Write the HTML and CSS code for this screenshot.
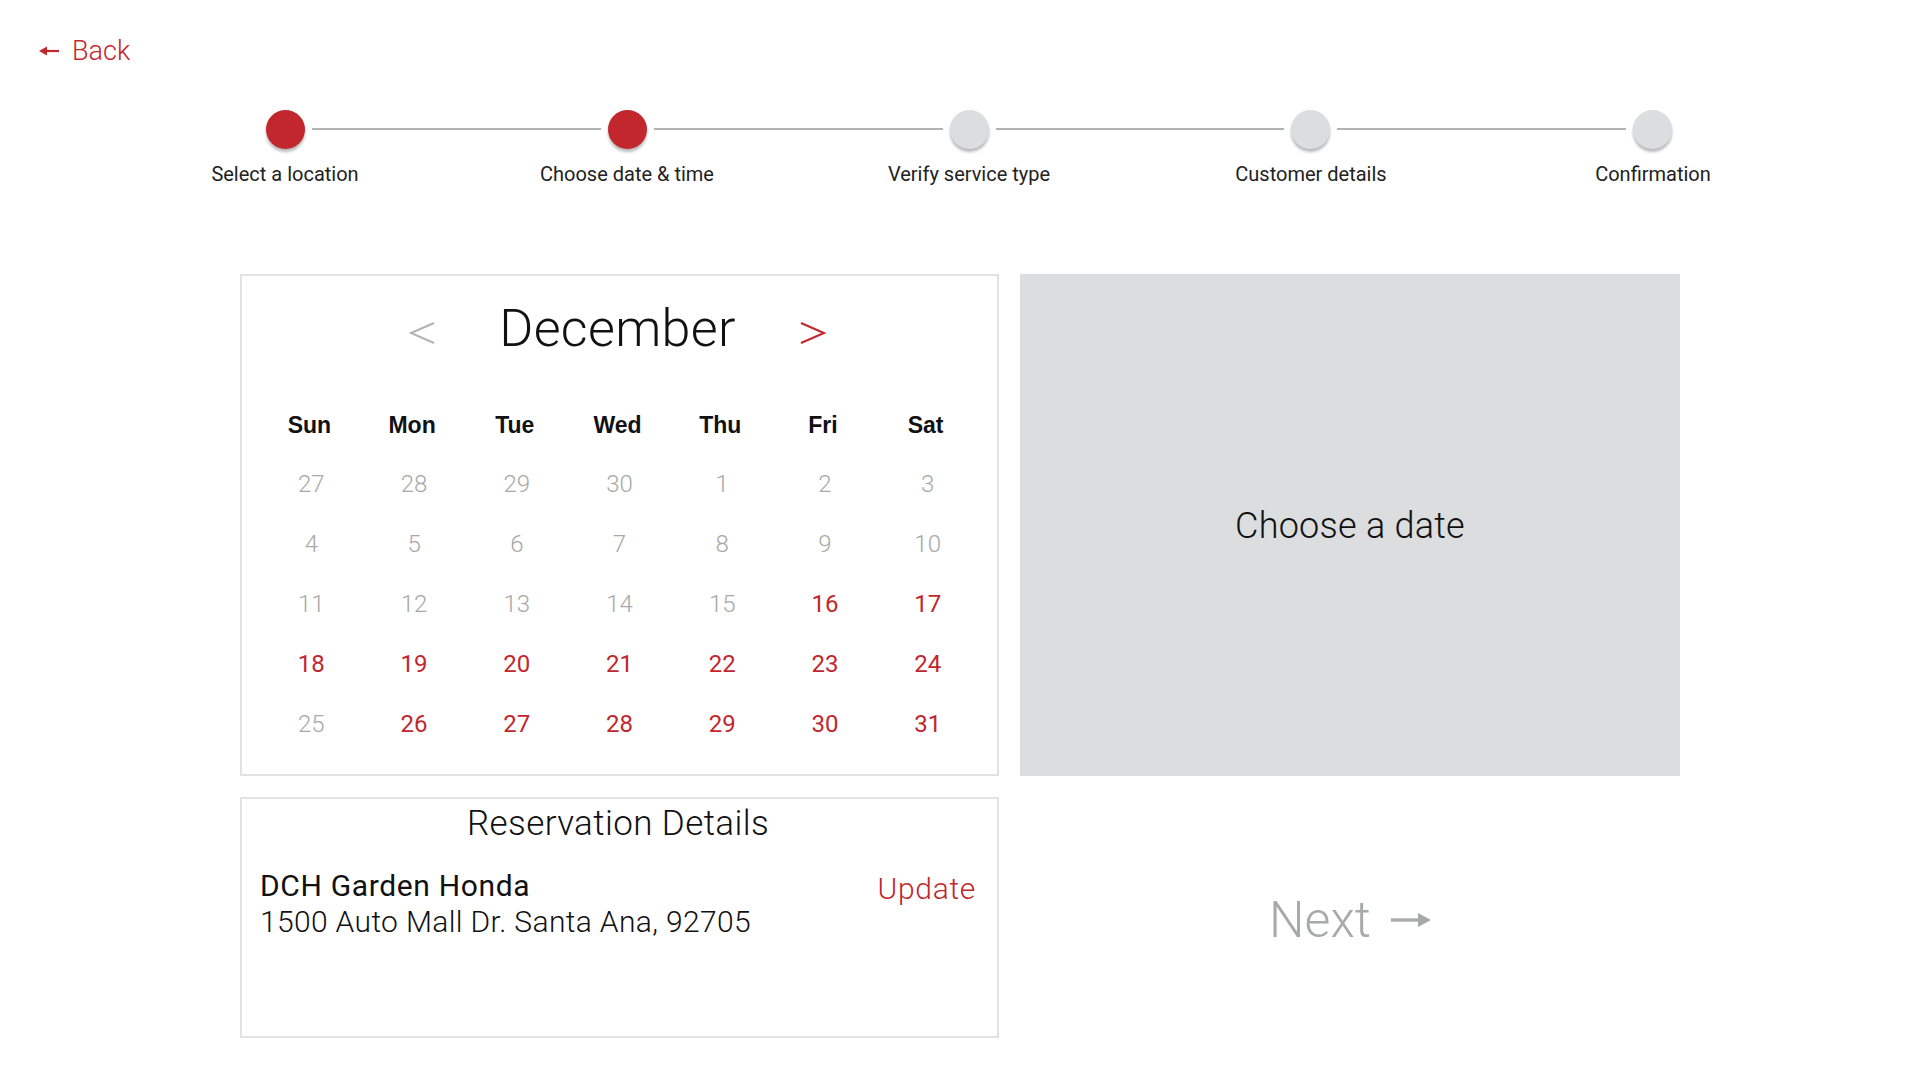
FILE: index.html
```html
<!DOCTYPE html>
<html lang="en">
<head>
  <meta charset="UTF-8">
  <meta name="viewport" content="width=device-width, initial-scale=1">
  <title>Choose date &amp; time</title>
  <link rel="stylesheet" href="styles.css">
</head>
<body>
  <header class="top">
    <a class="back" href="#">
      <svg class="arrow-left" width="20" height="12" viewBox="0 0 20 12"><path d="M20 6H7" stroke="currentColor" stroke-width="2.2"/><path d="M0 6L8 1.5V10.5Z" fill="currentColor"/></svg>
      Back
    </a>
  </header>

  <div class="stepper">
    <div class="dots">
      <span class="dot done"></span><span class="bar"></span>
      <span class="dot done"></span><span class="bar"></span>
      <span class="dot"></span><span class="bar"></span>
      <span class="dot"></span><span class="bar"></span>
      <span class="dot"></span>
    </div>
    <div class="labels">
      <span>Select a location</span>
      <span>Choose date &amp; time</span>
      <span>Verify service type</span>
      <span>Customer details</span>
      <span>Confirmation</span>
    </div>
  </div>

  <main class="booking">
    <section class="calendar">
      <div class="month">
        <button class="nav prev" type="button" aria-label="Previous month">
          <svg width="26" height="22" viewBox="0 0 26 22"><path d="M25 1L2 11L25 21" fill="none" stroke="currentColor" stroke-width="2.2"/></svg>
        </button>
        <h2>December</h2>
        <button class="nav next" type="button" aria-label="Next month">
          <svg width="26" height="22" viewBox="0 0 26 22"><path d="M1 1L24 11L1 21" fill="none" stroke="currentColor" stroke-width="2.2"/></svg>
        </button>
      </div>
      <div class="days">
        <span class="wd">Sun</span><span class="wd">Mon</span><span class="wd">Tue</span><span class="wd">Wed</span><span class="wd">Thu</span><span class="wd">Fri</span><span class="wd">Sat</span>

        <span class="off">27</span><span class="off">28</span><span class="off">29</span><span class="off">30</span><span class="off">1</span><span class="off">2</span><span class="off">3</span>
        <span class="off">4</span><span class="off">5</span><span class="off">6</span><span class="off">7</span><span class="off">8</span><span class="off">9</span><span class="off">10</span>
        <span class="off">11</span><span class="off">12</span><span class="off">13</span><span class="off">14</span><span class="off">15</span><span class="open">16</span><span class="open">17</span>
        <span class="open">18</span><span class="open">19</span><span class="open">20</span><span class="open">21</span><span class="open">22</span><span class="open">23</span><span class="open">24</span>
        <span class="off">25</span><span class="open">26</span><span class="open">27</span><span class="open">28</span><span class="open">29</span><span class="open">30</span><span class="open">31</span>
      </div>
    </section>

    <section class="times">
      <p>Choose a date</p>
    </section>

    <section class="details">
      <h3>Reservation Details</h3>
      <div class="dealer">
        <div>
          <div class="dealer-name">DCH Garden Honda</div>
          <div class="dealer-address">1500 Auto Mall Dr. Santa Ana, 92705</div>
        </div>
        <a class="update" href="#">Update</a>
      </div>
    </section>

    <div class="next-wrap">
      <a class="next-btn" href="#">
        Next
        <svg width="40" height="16" viewBox="0 0 40 16"><path d="M0 8H28" stroke="currentColor" stroke-width="3.4"/><path d="M40 8L27 1V15Z" fill="currentColor"/></svg>
      </a>
    </div>
  </main>
</body>
</html>
```

FILE: styles.css
```css
body { margin: 0; font-family: Roboto, "Liberation Sans", sans-serif; font-weight: 300; color: #111; background: #fff; }
a { text-decoration: none; }

.top { padding: 37px 0 0 39px; }
.back { display: inline-flex; align-items: center; gap: 13px; font-size: 27px; line-height: 28px; color: #c1272d; }

.stepper { width: 1710px; margin: 45px 0 0 114px; }
.dots { display: flex; align-items: center; padding: 0 152px; height: 38px; }
.dot { width: 39px; height: 39px; border-radius: 50%; background: #dcdddf; box-shadow: 0 3px 3px rgba(0,0,0,0.28); flex: none; }
.dot.done { background: #c1272d; }
.bar { flex: 1; height: 2px; margin: 0 7px; background: #b2b3b3; }
.labels { display: grid; grid-template-columns: repeat(5, 1fr); margin-top: 14px; }
.labels span { text-align: center; font-size: 20px; line-height: 24px; font-weight: 400; color: #222; }

.booking { display: grid; grid-template-columns: 759px 660px; grid-template-rows: 502px 241px; gap: 21px; width: 1440px; margin: 88px auto 0; }

.calendar { border: 2px solid #e2e2e2; padding: 23px 20px 0 16px; }
.month { display: flex; justify-content: center; align-items: center; gap: 64px; height: 60px; }
.month h2 { margin: 0; font-size: 52px; font-weight: 300; line-height: 60px; letter-spacing: 0.3px; }
.nav { border: none; background: none; padding: 0; margin-top: 8px; cursor: pointer; display: flex; }
.nav.prev { color: #b4b4b4; }
.nav.next { color: #c1272d; }
.days { display: grid; grid-template-columns: repeat(7, 1fr); grid-template-rows: 58px repeat(5, 60px); margin-top: 37px; }
.days span { display: flex; align-items: center; justify-content: center; font-size: 24px; }
.days .off, .days .open { padding-left: 4px; }
.days .wd { font-family: "Liberation Sans", Arial, sans-serif; font-weight: 700; font-size: 23px; color: #111; }
.days .off { color: #a8a8a8; }
.days .open { color: #c1272d; font-weight: 400; }

.times { background: #dcdddf; display: flex; align-items: center; justify-content: center; }
.times p { margin: 0; padding-top: 2px; font-size: 36px; line-height: 40px; letter-spacing: 0.25px; }

.details { border: 2px solid #e2e2e2; padding: 5px 21px 0 18px; }
.details h3 { margin: 0; text-align: center; font-size: 35px; font-weight: 300; line-height: 40px; letter-spacing: 0.4px; }
.dealer { display: flex; justify-content: space-between; align-items: flex-start; margin-top: 24px; font-size: 30px; line-height: 36px; }
.dealer-name { font-weight: 400; letter-spacing: 0.65px; }
.dealer-address { letter-spacing: 0.35px; }
.update { color: #c1272d; letter-spacing: 0.7px; margin-top: 3px; }

.next-wrap { display: flex; align-items: center; justify-content: center; padding-top: 5px; }
.next-btn { display: inline-flex; align-items: center; gap: 20px; font-size: 50px; line-height: 60px; color: #a8a9a9; }
```
